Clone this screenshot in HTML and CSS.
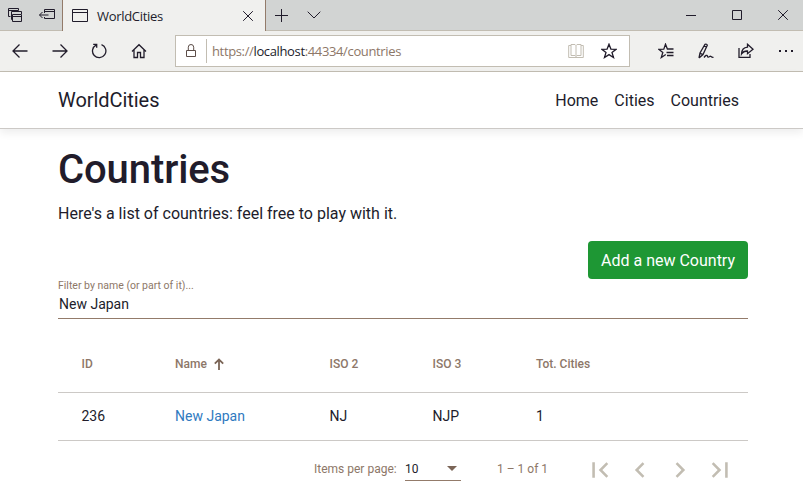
FILE: index.html
```html
<!DOCTYPE html>
<html lang="en">
<head>
<meta charset="utf-8">
<title>WorldCities</title>
<link rel="stylesheet" href="styles.css">
</head>
<body>
<div class="tabbar">
  <div class="tab-tools">
    <svg class="i16" viewBox="0 0 16 16"><path d="M3.500 9.500h-2v-8h10v2M1.500 3.500h10M6 12.500h-1.500v-8h10v2.500M5.500 14.500v-7h9v7zM5.500 9.500h9"/></svg>
    <svg class="i16 second" viewBox="0 0 16 16"><path d="M5.500 6v-3.500h10v9h-10V10M5.500 4.500h10M0.500 8h9M3.500 5l-3 3 3 3"/></svg>
  </div>
  <div class="tab">
    <svg class="tab-icon" viewBox="0 0 16 14"><path d="M.5.5h15v12H.5zM.5 3.500h15"/></svg>
    <span class="tab-title">WorldCities</span>
    <svg class="close" viewBox="0 0 10 10"><path d="M.2.2l9.600 9.600M9.800.2L.2 9.800"/></svg>
  </div>
  <svg class="plus" viewBox="0 0 13 13"><path d="M6.500 0v13M0 6.500h13"/></svg>
  <svg class="chevron" viewBox="0 0 14 8"><path d="M.7.7L7 7l6.300-6.300"/></svg>
  <div class="window-controls">
    <span><svg class="i10" viewBox="0 0 10 10"><path d="M0 5.500h10"/></svg></span>
    <span><svg class="i10" viewBox="0 0 10 10"><path d="M.5.5h9v9h-9z"/></svg></span>
    <span><svg class="i10" viewBox="0 0 10 10"><path d="M.2.2l9.600 9.600M9.800.2L.2 9.800"/></svg></span>
  </div>
</div>
<div class="toolbar">
  <span class="tool"><svg class="i16 bold" viewBox="0 0 16 16"><path d="M15.500 8H1M7.500 1.500L1 8l6.500 6.500"/></svg></span>
  <span class="tool"><svg class="i16 bold" viewBox="0 0 16 16"><path d="M.5 8H15M8.500 1.500L15 8l-6.500 6.500"/></svg></span>
  <span class="tool nudge"><svg class="i16 bold" viewBox="0 0 16 16"><path d="M10.500 1.700A6.700 6.700 0 1 1 5 2.100M2.200 1.300h3.500v3.500"/></svg></span>
  <span class="tool nudge"><svg class="i16 bold" viewBox="0 0 16 16"><path d="M1 8.500L8 1.700l7 6.800M3 7v7.500h3.500v-5h3v5H13V7"/></svg></span>
  <div class="address">
    <svg class="lock" viewBox="0 0 12 16"><path d="M1.500 7.500h9v6h-9zM3.300 7V4.200a2.700 2.700 0 0 1 5.400 0V7"/></svg>
    <span class="divider"></span>
    <span class="url">https://<b>localhost</b>:44334/countries</span>
    <svg class="i16 book" viewBox="0 0 16 16"><path d="M3 2.500H.7v12h14.600v-12H13M3 1.500h4l1 1 1-1h4v11H9l-1 1-1-1H3zM8 2.500v11"/></svg>
    <svg class="i16 bold star" viewBox="0 0 16 16"><path d="M8 1.200l1.900 4.900 5.200.2-4.100 3.200 1.500 5L8 11.600l-4.500 2.900 1.500-5L.9 6.300l5.200-.2z"/></svg>
  </div>
  <div class="actions">
    <span class="tool"><svg class="i16 bold" viewBox="0 0 16 16"><path d="M15.500 6H9.400L7.500 1.200 5.800 6.100.8 6.300l4 3.200-1.500 5 4.500-3M8.500 9.500h7M9 12.500h6.500"/></svg></span>
    <span class="tool"><svg class="i16 bold" viewBox="0 0 16 16"><path d="M1 15l1-5L7 1.300q1.800-.6 2.300 1L5 11.500 1 15M2.300 10.300l2.400 1.200M6 3l2.500 1.200M6 14.500c1.500-2 3-3 3.400-1.500s1 1.500 2.300.5 1.200 1.200 3.800.8"/></svg></span>
    <span class="tool"><svg class="i16 bold" viewBox="0 0 16 16"><path d="M1 5v9.300h11V11M9.500 1.300L15 6.200l-5.500 4.500V8C6.500 7.800 4.800 9 3.500 11c.2-4 2.500-6.500 6-6.800z"/></svg></span>
    <span class="tool"><svg class="i16 dots" viewBox="0 0 16 16"><path d="M1 7h2v2H1zM7 7h2v2H7zM13 7h2v2h-2z"/></svg></span>
  </div>
</div>
<header class="navbar">
  <span class="brand">WorldCities</span>
  <nav><span>Home</span><span>Cities</span><span>Countries</span></nav>
</header>
<main>
  <h1>Countries</h1>
  <p class="intro">Here's a list of countries: feel free to play with it.</p>
  <div class="button-row"><button class="add">Add a new Country</button></div>
  <div class="field">
    <label>Filter by name (or part of it)...</label>
    <div class="value">New Japan</div>
  </div>
  <div class="row head">
    <span>ID</span>
    <span>Name<svg class="sort" viewBox="0 0 10 12"><path d="M5 12V1.500M.8 5.700L5 1.500l4.200 4.200"/></svg></span>
    <span>ISO 2</span><span>ISO 3</span><span>Tot. Cities</span>
  </div>
  <div class="row">
    <span>236</span><span class="link">New Japan</span><span>NJ</span><span>NJP</span><span>1</span>
  </div>
  <div class="paginator">
    <span class="per-page">Items per page:</span>
    <div class="select"><span>10</span><i class="caret"></i></div>
    <span class="range">1 – 1 of 1</span>
    <div class="pages">
      <svg viewBox="0 0 24 24"><path d="M18.410 16.590L13.820 12l4.590-4.590L17 6l-6 6 6 6zM6 6h2v12H6z" transform="translate(-1.200 -1.200) scale(1.100)"/></svg>
      <svg viewBox="0 0 24 24"><path d="M15.410 7.410L14 6l-6 6 6 6 1.410-1.410L10.830 12z" transform="translate(-1.200 -1.200) scale(1.100)"/></svg>
      <svg viewBox="0 0 24 24"><path d="M10 6L8.590 7.410 13.170 12l-4.580 4.590L10 18l6-6z" transform="translate(-1.200 -1.200) scale(1.100)"/></svg>
      <svg viewBox="0 0 24 24"><path d="M5.590 7.410L10.180 12l-4.590 4.590L7 18l6-6-6-6zM16 6h2v12h-2z" transform="translate(-1.200 -1.200) scale(1.100)"/></svg>
    </div>
  </div>
</main>
</body>
</html>
```
FILE: styles.css
```css
* { box-sizing: border-box; }
body {
  margin: 0;
  height: 499px;
  overflow: hidden;
  background: #fff;
  color: #211c2b;
  font-family: Roboto, sans-serif;
  font-size: 16px;
}
svg { display: block; flex: none; fill: none; stroke: #211c2b; stroke-width: 1; }
.i16 { width: 16px; height: 16px; }
.i10 { width: 10px; height: 10px; }
.bold { stroke-width: 1.300; }

.tabbar {
  display: flex;
  align-items: center;
  height: 31px;
  background: #d2d4d3;
  border-bottom: 1px solid #c2bdb2;
}
.tab-tools { display: flex; flex: none; width: 62px; padding-left: 7px; }
.second { margin-left: 16px; }
.tab {
  display: flex;
  align-items: center;
  flex: none;
  width: 204px;
  height: 31px;
  padding: 0 12px 0 9px;
  margin-bottom: -1px;
  background: #f0f0ee;
  border-left: 1px solid #937b6a;
  border-right: 1px solid #937b6a;
}
.tab-icon { width: 16px; height: 14px; }
.tab-title { flex: 1; margin-left: 9px; font: 13px/18px "Open Sans", sans-serif; letter-spacing: -.3px; }
.close { width: 10px; height: 10px; margin-right: 0; }
.plus { width: 13px; height: 13px; margin-left: 9px; }
.chevron { width: 14px; height: 8px; margin-left: 19px; }
.window-controls { display: flex; flex: none; margin-left: 347px; }
.window-controls span { display: flex; justify-content: center; width: 46px; flex: none; }

.toolbar {
  display: flex;
  align-items: center;
  height: 41px;
  background: #f0f0ee;
  border-bottom: 1px solid #c2bdb2;
}
.tool { display: flex; justify-content: center; flex: none; width: 40px; }
.nudge { padding-right: 2px; }
.actions { display: flex; margin-left: 16px; }
.dots { fill: #211c2b; stroke: none; }
.address {
  display: flex;
  align-items: center;
  flex: none;
  width: 455px;
  height: 32px;
  margin-left: 15px;
  padding: 0 12px 0 9px;
  background: #fff;
  border: 1px solid #c2bdb2;
}
.lock { width: 12px; height: 16px; stroke: #5c4d48; }
.divider { width: 1px; height: 24px; margin-left: 9px; background: #c2bdb2; }
.url { flex: 1; margin-left: 5px; font: 13px/18px "Open Sans", sans-serif; letter-spacing: -.360px; color: #8d7768; }
.url b { font-weight: 400; color: #211c2b; }
.book { stroke: #c2bdb2; }
.star { margin-left: 17px; }

.navbar {
  display: flex;
  align-items: center;
  justify-content: space-between;
  height: 57px;
  padding: 0 64px 0 58px;
  border-bottom: 1px solid #ccc9c6;
  box-shadow: 0 4px 8px rgba(0, 0, 0, .07);
}
.brand { font-size: 20px; letter-spacing: -.05px; }
.navbar nav { display: flex; gap: 16px; }

main { width: 690px; margin-left: 58px; padding-top: 17px; }
h1 { margin: 0; font-size: 40px; line-height: 48px; font-weight: 500; letter-spacing: -.1px; }
.intro { margin: 8px 0 0; line-height: 24px; }
.button-row { display: flex; justify-content: flex-end; margin-top: 15px; }
.add {
  width: 160px;
  height: 38px;
  padding: 2px 0 0;
  border: 0;
  border-radius: 4px;
  background: #1e9734;
  color: #fff;
  font: 16px/24px Roboto, sans-serif;
}
.field { height: 40px; border-bottom: 1px solid #937b6a; }
.field label { display: block; padding-top: 1px; font-size: 10.500px; line-height: 12px; color: #8d7768; }
.value { padding: 4px 0 0 1px; font-size: 14px; line-height: 17px; }

.row {
  display: grid;
  grid-template-columns: 93.500px 154.500px 103px 103.500px 1fr;
  align-items: center;
  height: 48px;
  padding: 0 0 2px 23.500px;
  border-bottom: 1px solid #ccc9c6;
  font-size: 14px;
}
.row > span { display: flex; align-items: center; }
.head { height: 74px; padding-top: 16px; padding-bottom: 0; font-size: 12px; font-weight: 500; color: #8d7768; }
.sort { width: 10px; height: 12px; margin-left: 7px; stroke: #7b6557; stroke-width: 1.800; }
.link { color: #2f7abf; }

.paginator { display: flex; align-items: center; height: 56px; padding-left: 256px; font-size: 12px; color: #8d7768; }
.per-page { width: 91px; }
.select {
  display: flex;
  align-items: center;
  justify-content: space-between;
  width: 56px;
  height: 24px;
  padding-right: 4px;
  border-bottom: 1px solid #937b6a;
  color: #211c2b;
}
.caret { border: 5px solid transparent; border-top-color: #7b6557; border-bottom: 0; }
.range { width: 88.500px; margin-left: 36px; }
.pages { display: flex; gap: 12px; padding-top: 1px; }
.pages svg { width: 28px; height: 28px; fill: #c2bdb2; stroke: none; }
```
